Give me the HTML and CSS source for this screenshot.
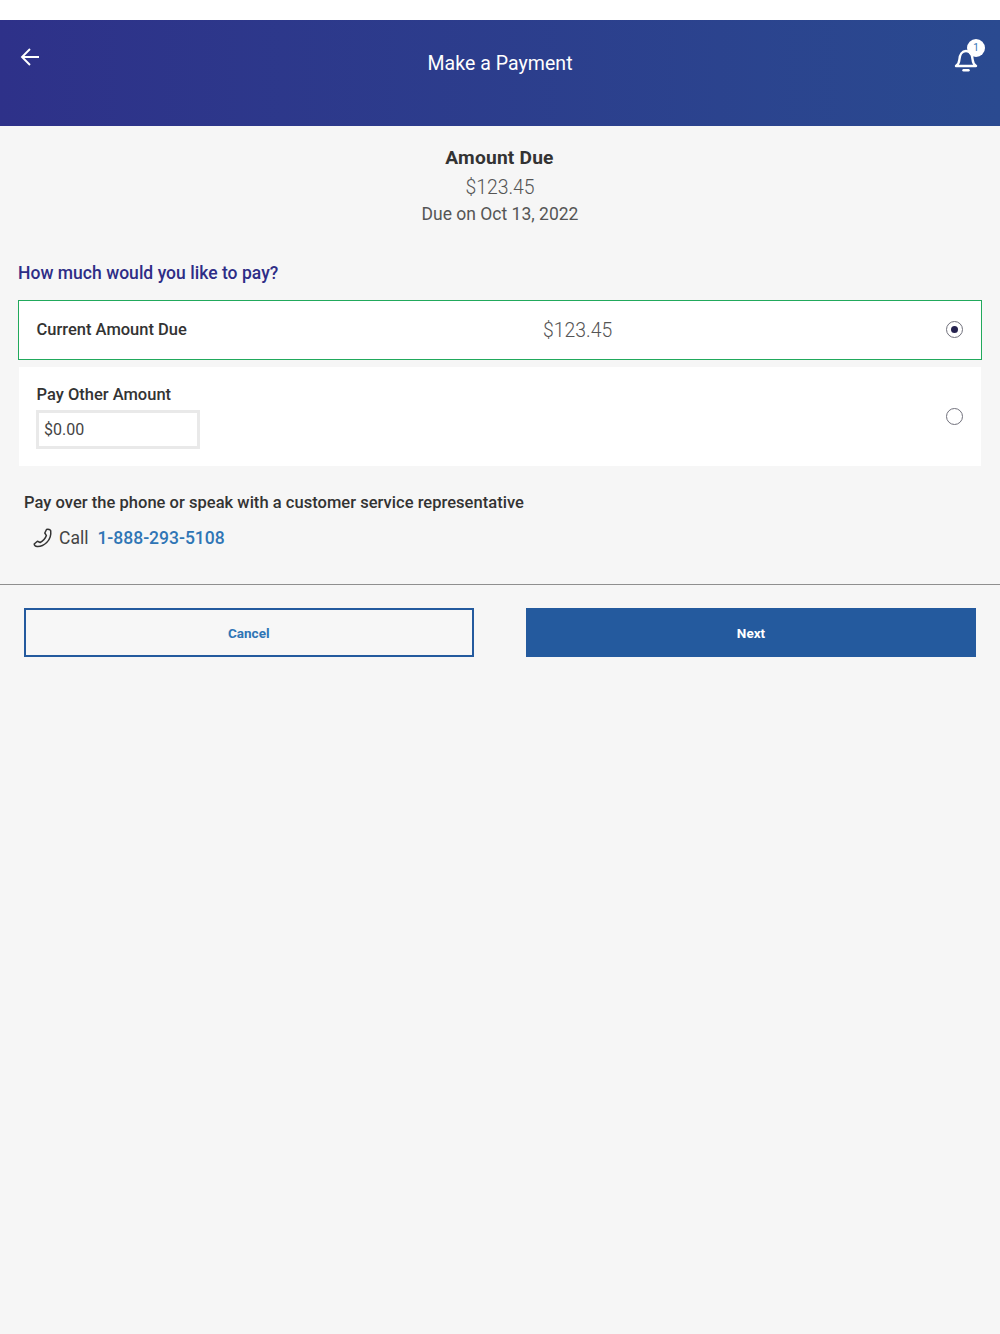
FILE: index.html
```html
<!DOCTYPE html>
<html lang="en">
<head>
<meta charset="utf-8">
<title>Make a Payment</title>
<link rel="stylesheet" href="styles.css">
</head>
<body>
<div class="statusbar"></div>
<header class="topbar">
  <svg class="back" width="20" height="20" viewBox="0 0 20 20" fill="none" stroke="#fff" stroke-width="1.9"><path d="M19 10H3M10 2 2 10l8 8"/></svg>
  <h1 class="title">Make a Payment</h1>
  <div class="bell">
    <svg width="26" height="30" viewBox="0 0 26 30" fill="none" stroke="#fff" stroke-width="2.4" stroke-linejoin="round"><path d="M3 20c2.400-1.800 3.200-3.700 3.400-6.500.3-5 2.800-8.500 6.600-8.500s6.300 3.500 6.600 8.500c.2 2.800 1 4.700 3.400 6.500z"/><path d="M10.500 24.300h5" stroke-linecap="round"/></svg>
    <span class="badge">1</span>
  </div>
</header>
<main>
  <section class="due">
    <div class="due-label">Amount Due</div>
    <div class="due-amount">$123.45</div>
    <div class="due-date">Due on Oct 13, 2022</div>
  </section>
  <h2 class="question">How much would you like to pay?</h2>
  <div class="option selected">
    <span class="opt-label">Current Amount Due</span>
    <span class="opt-amount">$123.45</span>
    <span class="radio checked"></span>
  </div>
  <div class="option other">
    <div class="other-body">
      <span class="opt-label">Pay Other Amount</span>
      <div class="input">$0.00</div>
    </div>
    <span class="radio"></span>
  </div>
  <section class="phone">
    <p class="phone-text">Pay over the phone or speak with a customer service representative</p>
    <div class="call">
      <svg width="20" height="20" viewBox="0 0 20 20" fill="none" stroke="#333" stroke-width="1.500" stroke-linejoin="round"><path d="M13.500 1.500c1.800-.6 3.900.3 4.200 1.300.6 4.700-1.100 8.800-4 11.700-2.700 2.600-6 4.200-9.500 4-1.500-.1-2.900-1.100-3-2.500l3.200-2.800 2.800 1.300c2.900-1.400 5.100-3.900 6.200-6.900l-1.600-2.600z"/></svg>
      <span class="call-word">Call</span>
      <a class="call-num">1-888-293-5108</a>
    </div>
  </section>
  <div class="actions">
    <button class="btn cancel">Cancel</button>
    <button class="btn next">Next</button>
  </div>
</main>
</body>
</html>
```

FILE: styles.css
```css
* { box-sizing: border-box; }
html, body { margin: 0; height: 100%; }
body {
  background: #f6f6f6;
  font-family: Roboto, "Liberation Sans", sans-serif;
  color: #333;
}
.statusbar { height: 20px; background: #fff; }
.topbar {
  height: 106px;
  background: linear-gradient(90deg, #2e3189 0%, #2a4a90 100%);
  display: flex;
  justify-content: space-between;
  align-items: flex-start;
  padding: 27px 0 0 20px;
  position: relative;
}
.back { display: block; }
.title {
  margin: 0;
  position: absolute;
  left: 0;
  right: 0;
  top: 32px;
  text-align: center;
  color: #fff;
  font-size: 19.500px;
  line-height: 24px;
  font-weight: 400;
  letter-spacing: .05px;
}
.bell { position: relative; width: 47px; height: 30px; margin-top: -1px; }
.bell svg { display: block; position: absolute; top: 0; left: 0; }
.badge {
  position: absolute;
  top: -7px;
  left: 14px;
  width: 18px;
  height: 18px;
  border-radius: 50%;
  background: #fff;
  color: #2f75b5;
  font-size: 10px;
  line-height: 18px;
  text-align: center;
}
.due { text-align: center; padding-top: 20px; }
.due-label { font-size: 19.200px; line-height: 24px; font-weight: 700; letter-spacing: .2px; padding-right: 1px; }
.due-amount { font-size: 19.400px; line-height: 24px; margin-top: 6px; font-weight: 300; color: #555; }
.due-date { font-size: 17.500px; line-height: 24px; margin-top: 2px; color: #555; }
.question {
  margin: 35px 18px 0;
  font-size: 17.500px;
  line-height: 24px;
  font-weight: 500;
  color: #2e2d86;
  letter-spacing: .03px;
}
.option {
  margin: 0 18px;
  background: #fff;
  display: flex;
  align-items: center;
  position: relative;
}
.selected {
  margin-top: 15px;
  height: 60px;
  border: 1px solid #21a95c;
  padding: 0 17.500px;
}
.other {
  margin-top: 7px;
  margin-left: 19px;
  margin-right: 19px;
  height: 99px;
  padding: 17px 18px 0 17.500px;
  align-items: flex-start;
}
.opt-label { font-size: 16.500px; line-height: 22px; font-weight: 500; color: #333; }
.opt-amount {
  position: absolute;
  left: 524px;
  top: 18px;
  font-size: 19.400px;
  line-height: 24px;
  font-weight: 300;
  color: #555;
}
.radio {
  position: absolute;
  right: 18px;
  top: 50%;
  margin-top: -9px;
  width: 17px;
  height: 17px;
  border: 1px solid #71717c;
  border-radius: 50%;
  background: #fff;
}
.checked::after {
  content: "";
  position: absolute;
  left: 4px;
  top: 4px;
  width: 7px;
  height: 7px;
  border-radius: 50%;
  background: #25224f;
}
.other-body { display: flex; flex-direction: column; }
.input {
  margin-top: 4px;
  margin-left: -.5px;
  width: 164px;
  height: 39px;
  border: 3px solid #e9e9e9;
  background: #fff;
  padding: 0 5px;
  font-size: 16px;
  line-height: 33px;
  color: #444;
}
.phone { padding: 0 24px; margin-top: 25px; }
.phone-text { margin: 0; font-size: 16.500px; line-height: 24px; font-weight: 500; color: #333; letter-spacing: .03px; }
.call { display: flex; align-items: center; margin-top: 11px; padding-left: 9px; height: 24px; }
.call svg { display: block; margin-right: 6px; }
.call-word { font-size: 17.500px; color: #444; margin-right: 9px; }
.call-num { font-size: 17.500px; font-weight: 500; color: #2f75b5; }
.actions {
  margin-top: 34px;
  border-top: 1px solid #8f8f8f;
  padding: 23px 24px 0;
  display: flex;
  justify-content: space-between;
}
.btn {
  height: 49px;
  font-family: inherit;
  font-size: 13.500px;
  font-weight: 700;
  border-radius: 0;
}
.cancel { width: 449.500px; background: #f7f7f7; border: 2px solid #245a9e; color: #2f75b5; }
.next { width: 450px; background: #245a9e; border: 0; color: #fff; }
```
